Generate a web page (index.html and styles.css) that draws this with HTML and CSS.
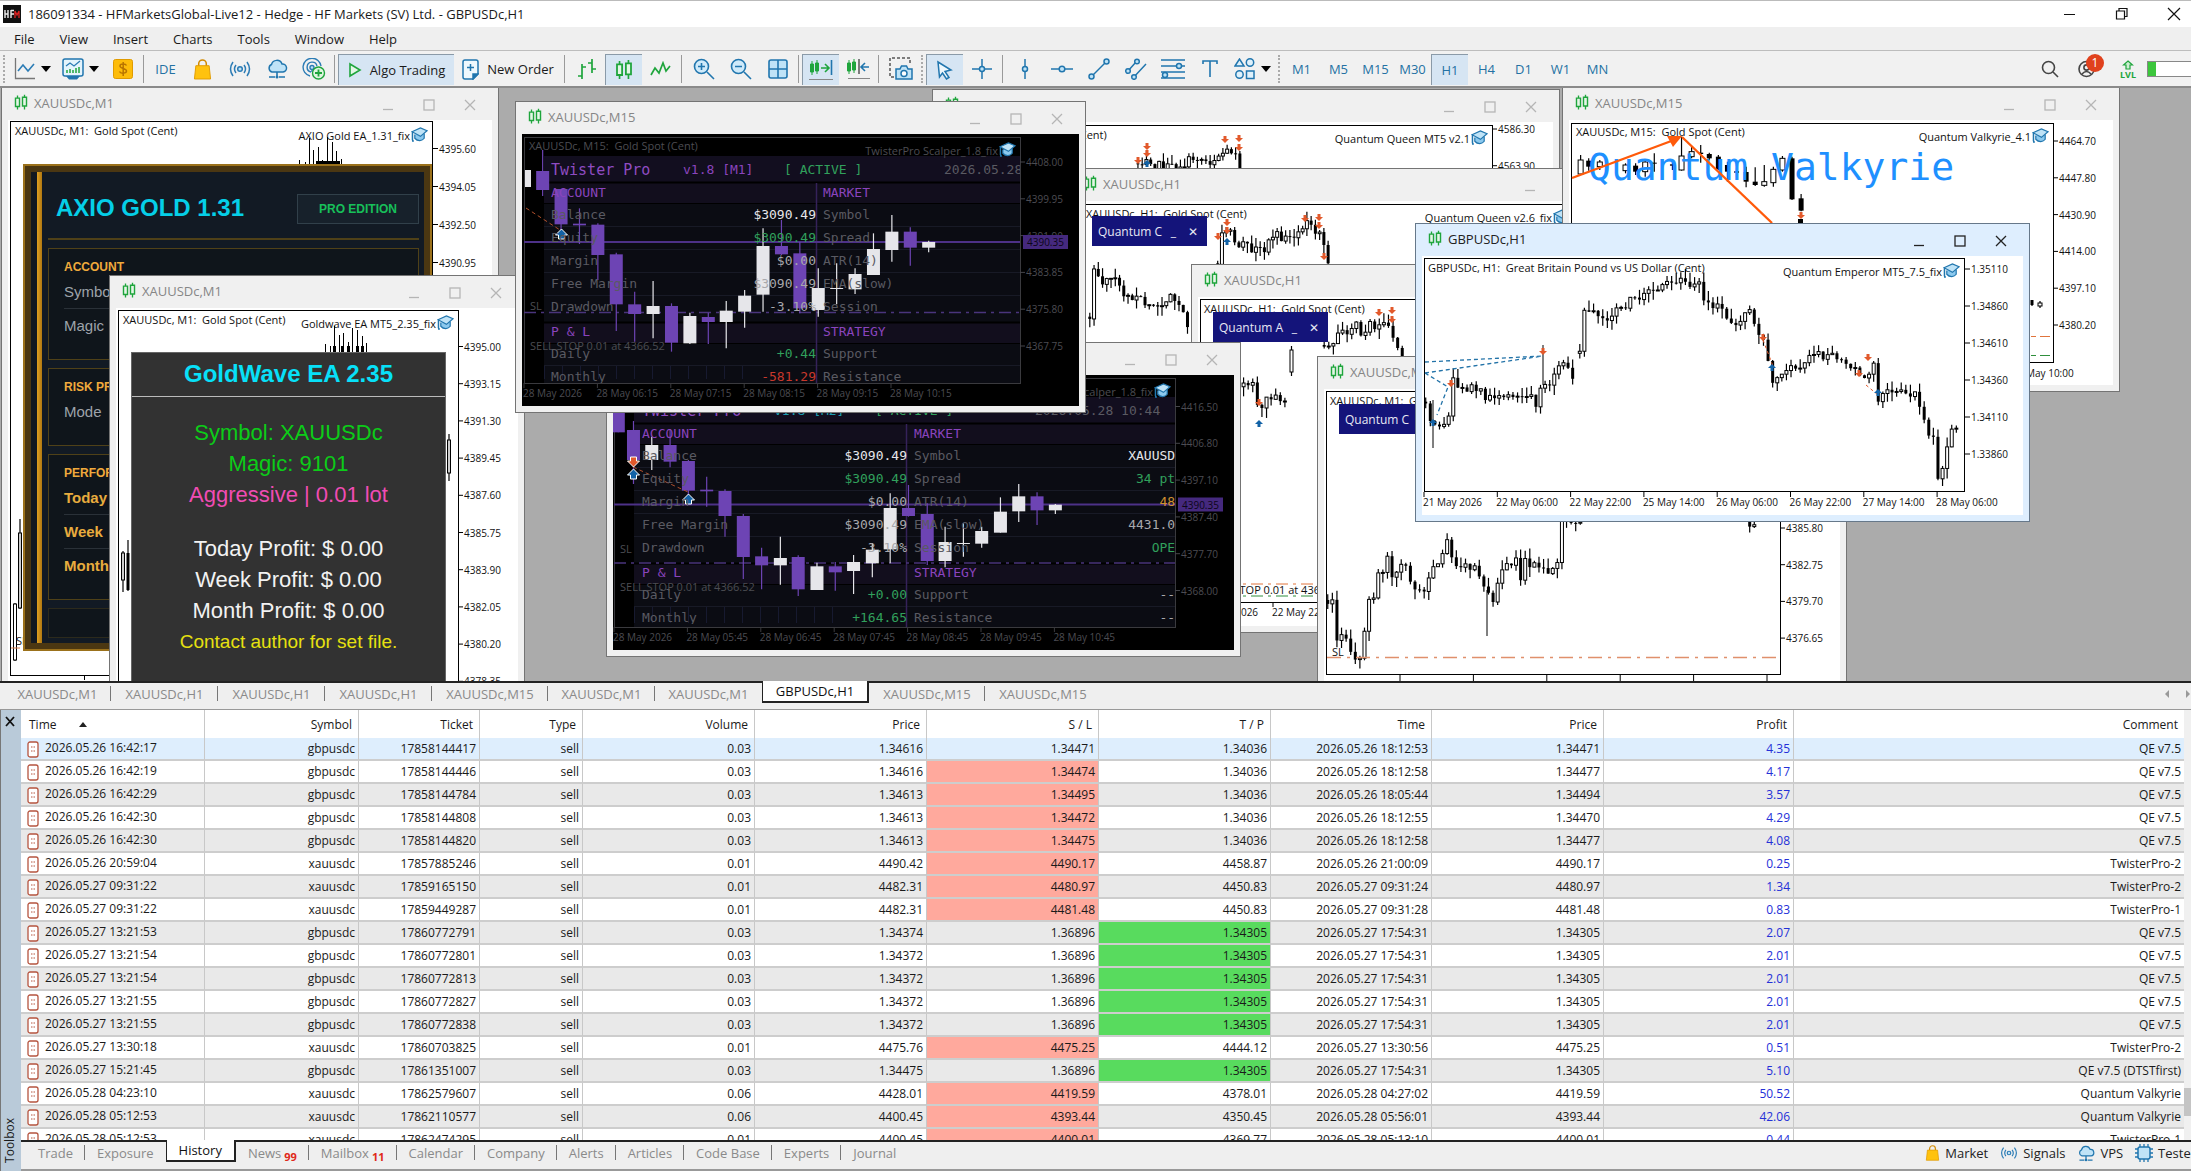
FILE: index.html
```
<!DOCTYPE html>
<html lang="en">
<head>
    <meta charset="UTF-8">
    <meta name="viewport" content="width=device-width, initial-scale=1.0">
    <title>186091334 - HFMarketsGlobal-Live12</title>
    <link rel="stylesheet" href="styles.css">
</head>
<body>
    <!-- Shared icons -->
    <svg class="defs" width="0" height="0">
        <symbol id="i-candles" viewBox="0 0 16 18"><path d="M4 1v3M4 13v4M12 0v3M12 13v4" stroke="#1fa53c" stroke-width="1.5"/><path d="M1.7 4h4.6v9.500H1.700zM9.700 3h4.600v10H9.700z" fill="#e4f6e6" stroke="#1fa53c" stroke-width="1.600"/></symbol>
        <symbol id="i-cap" viewBox="0 0 18 16"><path d="M4 8v4c3 3.500 8 3 10 0V7" fill="#8cc9ee" stroke="#2176ae" stroke-width="1.300"/><path d="M1 5l9-4 7 3-7 6z" fill="#bfe3f7" stroke="#2176ae" stroke-width="1.300"/><path d="M1.500 5v9M1 15h2" stroke="#2176ae" stroke-width="1.600"/></symbol>
        <symbol id="i-bag" viewBox="0 0 20 22"><path d="M6 10V5a4 4 0 0 1 8 0v5" fill="none" stroke="#d18a00" stroke-width="1.600"/><path d="M3 7h14l1.500 14h-17z" fill="#ffc20e" stroke="#e09b00"/></symbol>
        <symbol id="i-signal" viewBox="0 0 22 18"><g fill="none" stroke="#2c7cb5" stroke-width="1.500"><circle cx="11" cy="9" r="2.300" fill="#bfe3f7"/><path d="M7 5q-3 4 0 8M15 5q3 4 0 8M4 2q-5 7 0 14M18 2q5 7 0 14"/></g></symbol>
        <symbol id="i-cloud" viewBox="0 0 22 20"><path d="M6 13a4 4 0 0 1-.500-7.500A5.500 5.500 0 0 1 16 5a4 4 0 0 1 1 8z" fill="#bfe3f7" stroke="#2176ae" stroke-width="1.500"/><path d="M11 13v5M3 18h6M13 18h6" stroke="#2176ae" stroke-width="1.600"/><circle cx="11" cy="18" r="1.500" fill="#2176ae"/></symbol>
    </svg>

    <header class="titlebar">
        <svg width="18" height="18" viewBox="0 0 18 18"><rect width="18" height="18" fill="#111"/><path d="M2 5v8M2 9h3M5 5v8M8 5v8M8 5.500h3M8 9h3" stroke="#eee" stroke-width="1.400"/><path d="M12 13V6l2 4 2-4v7" fill="none" stroke="#d22" stroke-width="1.300"/></svg>
        <h1>186091334 - HFMarketsGlobal-Live12 - Hedge - HF Markets (SV) Ltd. - GBPUSDc,H1</h1>
        <div class="sysbuttons">
            <button aria-label="Minimize"><svg width="14" height="14"><path d="M1 7.500h11" stroke="#111"/></svg></button>
            <button aria-label="Restore"><svg width="14" height="14"><path d="M4 4V1.500h8v8H9.500M1.500 4h8v8h-8z" fill="none" stroke="#111" stroke-width="1.200"/></svg></button>
            <button aria-label="Close"><svg width="14" height="14"><path d="M1 1l12 12M13 1L1 13" stroke="#111" stroke-width="1.200"/></svg></button>
        </div>
    </header>

    <nav class="menubar">
        <button>File</button><button>View</button><button>Insert</button><button>Charts</button><button>Tools</button><button>Window</button><button>Help</button>
    </nav>

    <div class="toolbar">
        <span class="grip"></span>
        <button class="tool drop" aria-label="New chart"><svg width="22" height="22" fill="none"><path d="M1.500 0v20.500H21" stroke="#777" stroke-width="1.300"/><path d="M4 13l5-6 5 6 6-7" stroke="#2c7cb5" stroke-width="1.600"/></svg><i></i></button>
        <button class="tool drop" aria-label="Profiles"><svg width="22" height="22" fill="none"><path d="M4 18h14l-3 3.500H7z" fill="#2176ae"/><rect x="1" y="1" width="20" height="17" rx="2" fill="#e5f4fc" stroke="#2176ae" stroke-width="1.500"/><path d="M4 8l4-3 4 3 6-5" stroke="#2c7cb5" stroke-width="1.300"/><path d="M5 15v-3M8 15v-4M11 15v-3M14 15v-5M17 15V9" stroke="#1fa53c" stroke-width="1.500"/></svg><i></i></button>
        <button class="tool" aria-label="Symbols"><svg width="20" height="20"><rect x=".5" y=".5" width="19" height="19" rx="2" fill="#fdbc0a" stroke="#e09b00"/><path d="M13.500 6.500c-1-2-6.500-2-6.500.500 0 3 6.500 2 6.500 5 0 2.500-6 3-7 .500M10.200 3v14" fill="none" stroke="#b87400" stroke-width="1.500"/></svg></button>
        <span class="sep"></span>
        <button class="tool ide">IDE</button>
        <button class="tool" aria-label="Market"><svg width="19" height="21"><use href="#i-bag"/></svg></button>
        <button class="tool" aria-label="Signals"><svg width="22" height="18"><use href="#i-signal"/></svg></button>
        <button class="tool" aria-label="VPS"><svg width="22" height="20"><use href="#i-cloud"/></svg></button>
        <button class="tool" aria-label="Community"><svg width="24" height="22" fill="none" stroke="#2c7cb5" stroke-width="1.400"><path d="M8 18A9 9 0 1 1 19 8M9 14a5 5 0 1 1 6-6M10 10v4"/><circle cx="10" cy="9.500" r="2" fill="#bfe3f7"/><circle cx="16.500" cy="15" r="6" fill="#dff5df" stroke="#1fa53c"/><path d="M13 15h7M16.500 11.500v7" stroke="#1fa53c" stroke-width="1.800"/></svg></button>
        <span class="sep"></span>
        <button class="tool wide algo active"><svg width="14" height="16"><path d="M2 2l10 6-10 6z" fill="#e4f6e6" stroke="#1fa53c" stroke-width="1.600"/></svg>Algo Trading</button>
        <button class="tool wide order"><svg width="17" height="21" fill="none" stroke="#2176ae" stroke-width="1.500"><path d="M1 3a2 2 0 0 1 2-2h11a2 2 0 0 1 2 2v12l-5 5H3a2 2 0 0 1-2-2z" fill="#eef8fd"/><path d="M11 20v-5h5z" fill="#2176ae"/><path d="M8.500 5v7M5 8.500h7"/></svg>New Order</button>
        <span class="sep"></span>
        <button class="tool" aria-label="Bar chart"><svg width="20" height="20" fill="none" stroke="#1fa53c" stroke-width="1.700"><path d="M5 5v15M1 17h4M5 8h4M15 0v14M11 4h4M15 10h4"/></svg></button>
        <button class="tool active" aria-label="Candlesticks"><svg width="18" height="20"><use href="#i-candles"/></svg></button>
        <button class="tool" aria-label="Line chart"><svg width="22" height="16" fill="none" stroke="#1fa53c" stroke-width="1.700"><path d="M1 14l4-7 4 5 4-10 3 8 4-5"/></svg></button>
        <span class="sep"></span>
        <button class="tool" aria-label="Zoom in"><svg width="22" height="22" fill="none" stroke="#2176ae" stroke-width="1.600"><circle cx="8.500" cy="8.500" r="7" fill="#cfeafa"/><path d="M14 14l7 7M5 8.500h7M8.500 5v7"/></svg></button>
        <button class="tool" aria-label="Zoom out"><svg width="22" height="22" fill="none" stroke="#2176ae" stroke-width="1.600"><circle cx="8.500" cy="8.500" r="7" fill="#cfeafa"/><path d="M14 14l7 7M5 8.500h7"/></svg></button>
        <button class="tool" aria-label="Tile windows"><svg width="20" height="20"><rect x="1" y="1" width="18" height="18" rx="2" fill="#bfe3f7" stroke="#2176ae" stroke-width="1.600"/><path d="M10 1v18M1 10h18" stroke="#2176ae" stroke-width="1.600"/></svg></button>
        <span class="sep"></span>
        <button class="tool active" aria-label="Auto scroll"><svg width="24" height="24" fill="none"><path d="M3 3v14M8 2v14" stroke="#1fa53c"/><path d="M1.500 6h3v8h-3zM6.500 5h3v8h-3z" fill="#1fa53c" stroke="#1fa53c"/><path d="M12 10h7M16 6l4 4-4 4" stroke="#1fa53c" stroke-width="1.600"/><path d="M22.500 2v15" stroke="#2176ae" stroke-width="1.600"/><path d="M0 21.500h24" stroke="#888"/></svg></button>
        <button class="tool" aria-label="Chart shift"><svg width="24" height="24" fill="none"><path d="M3 3v14M8 2v14" stroke="#1fa53c"/><path d="M1.500 6h3v8h-3zM6.500 5h3v8h-3z" fill="#1fa53c" stroke="#1fa53c"/><path d="M13 2v15" stroke="#555" stroke-width="1.500"/><path d="M16 10h7M19 6l-4 4 4 4" stroke="#2176ae" stroke-width="1.600"/><path d="M2 21.500h22" stroke="#888"/></svg></button>
        <span class="sep"></span>
        <button class="tool" aria-label="Screenshot"><svg width="24" height="24" fill="none" stroke="#2176ae" stroke-width="1.500"><path d="M5 20H1V1h20v6" stroke="#555" stroke-dasharray="3 2"/><path d="M7 12h4l1.500-3h5L19 12h4v10H7z" fill="#bfe3f7"/><circle cx="15" cy="16.500" r="3" fill="#fff"/></svg></button>
        <span class="grip"></span>
        <button class="tool active" aria-label="Cursor"><svg width="18" height="20"><path d="M2 2l13 8-6 1.500 4 6-2.500 1.500-4-6-3 4z" fill="#eef8fd" stroke="#2176ae" stroke-width="1.500"/></svg></button>
        <button class="tool" aria-label="Crosshair"><svg width="20" height="20" fill="none" stroke="#2176ae" stroke-width="1.500"><path d="M10 0v20M0 10h20"/><circle cx="10" cy="10" r="2.500" fill="#bfe3f7"/></svg></button>
        <span class="sep"></span>
        <button class="tool" aria-label="Vertical line"><svg width="8" height="20" fill="none" stroke="#2176ae" stroke-width="1.500"><path d="M4 0v20"/><circle cx="4" cy="10" r="2.500" fill="#bfe3f7"/></svg></button>
        <button class="tool" aria-label="Horizontal line"><svg width="22" height="8" fill="none" stroke="#2176ae" stroke-width="1.500"><path d="M0 4h22"/><circle cx="11" cy="4" r="2.800" fill="#bfe3f7"/></svg></button>
        <button class="tool" aria-label="Trend line"><svg width="22" height="22" fill="#bfe3f7" stroke="#2176ae" stroke-width="1.500"><path d="M4 18L18 4"/><circle cx="3.500" cy="18.500" r="2.500"/><circle cx="18.500" cy="3.500" r="2.500"/></svg></button>
        <button class="tool" aria-label="Channel"><svg width="22" height="22" fill="#bfe3f7" stroke="#2176ae" stroke-width="1.500"><path d="M3 13L11 4M8 20L21 6"/><circle cx="3" cy="13" r="2.300"/><circle cx="12" cy="3.500" r="2.300"/><circle cx="9" cy="19" r="2.300"/></svg></button>
        <button class="tool" aria-label="Fibonacci"><svg width="24" height="22" fill="#bfe3f7" stroke="#2176ae" stroke-width="1.500"><path d="M0 2h24M0 8h24M0 14h24M0 20h24"/><circle cx="18" cy="8" r="2.500"/><circle cx="4" cy="17" r="2.500"/></svg></button>
        <button class="tool" aria-label="Text"><svg width="16" height="18" fill="none" stroke="#2176ae" stroke-width="1.600"><path d="M1 4V1h14v3M8 1v16"/></svg></button>
        <button class="tool drop" aria-label="Shapes"><svg width="22" height="22" fill="#dff1fb" stroke="#2176ae" stroke-width="1.500"><path d="M1 8l4.500-7L10 8z"/><circle cx="16" cy="4.500" r="3.700"/><circle cx="5.500" cy="16.500" r="3.700"/><rect x="12.500" y="13" width="7.500" height="7.500"/></svg><i></i></button>
        <span class="grip"></span>
        <button class="tool tf">M1</button><button class="tool tf">M5</button><button class="tool tf">M15</button><button class="tool tf">M30</button><button class="tool tf active">H1</button><button class="tool tf">H4</button><button class="tool tf">D1</button><button class="tool tf">W1</button><button class="tool tf">MN</button>

        <div class="status">
            <button class="tool" aria-label="Search"><svg width="18" height="18" fill="none" stroke="#444" stroke-width="1.600"><circle cx="7.500" cy="7.500" r="6"/><path d="M12 12l5 5"/></svg></button>
            <button class="tool account" aria-label="Account"><svg width="18" height="18" fill="none" stroke="#444" stroke-width="1.600"><circle cx="8.500" cy="9" r="7.500"/><circle cx="8.500" cy="7.500" r="2.600"/><path d="M4 14q4.500-5 9 0"/></svg><span class="badge">1</span></button>
            <span class="lvl"><svg width="12" height="10"><path d="M6 1l4.500 4H8v4H4V5H1.500z" fill="#cfeed3" stroke="#1fa53c" stroke-width="1.200"/></svg>LVL</span>
            <span class="meter"></span>
        </div>
    </div>

    <main class="desktop">
        <section class="win" id="win-axio">
            <div class="caption"><svg width="14" height="17"><use href="#i-candles"/></svg><span>XAUUSDc,M1</span></div>
            <div class="client">
                <svg class="chart" id="c-axio" viewBox="8 120 484 560" width="484" height="560"></svg>
                <div class="axio">
                    <div class="axio-head"><strong>AXIO GOLD 1.31</strong><em>PRO EDITION</em></div>
                    <div class="axio-card tall"><b>ACCOUNT</b><p>Symbol</p><p>Magic</p></div>
                    <div class="axio-card"><b>RISK PROFILE</b><p>Mode</p></div>
                    <div class="axio-card perf"><b>PERFORMANCE</b><p>Today</p><p>Week</p><p>Month</p></div>
                    <div class="axio-card last"></div>
                </div>
            </div>
        </section>

        <section class="win" id="win-wave">
            <div class="caption"><svg width="14" height="17"><use href="#i-candles"/></svg><span>XAUUSDc,M1</span></div>
            <div class="client">
                <svg class="chart" id="c-wave" viewBox="116 308 402 400" width="402" height="400"></svg>
                <div class="wave">
                    <h2>GoldWave EA 2.35</h2>
                    <p class="green">Symbol: XAUUSDc</p>
                    <p class="green">Magic: 9101</p>
                    <p class="pink">Aggressive | 0.01 lot</p>
                    <p class="first">Today Profit: $ 0.00</p>
                    <p>Week Profit: $ 0.00</p>
                    <p>Month Profit: $ 0.00</p>
                    <p class="note">Contact author for set file.</p>
                </div>
            </div>
        </section>

        <section class="win" id="win-queen21">
            <div class="caption"><svg width="14" height="17"><use href="#i-candles"/></svg></div>
            <div class="client"><svg class="chart" id="c-queen21" viewBox="939 122 614 260" width="614" height="260"></svg></div>
        </section>

        <section class="win" id="win-queen26">
            <div class="caption"><svg width="14" height="17"><use href="#i-candles"/></svg><span>XAUUSDc,H1</span></div>
            <div class="client">
                <svg class="chart" id="c-queen26" viewBox="1077 201 560 360" width="560" height="360"></svg>
                <div class="mini"><span>Quantum C</span><button aria-label="Collapse">_</button><button aria-label="Close">✕</button></div>
            </div>
        </section>

        <section class="win" id="win-advisor">
            <div class="caption"><svg width="14" height="17"><use href="#i-candles"/></svg><span>XAUUSDc,H1</span></div>
            <div class="client">
                <svg class="chart" id="c-advisor" viewBox="1198 297 486 329" width="486" height="329"></svg>
                <div class="mini"><span>Quantum A</span><button aria-label="Collapse">_</button><button aria-label="Close">✕</button></div>
            </div>
        </section>

        <section class="win" id="win-queenm1">
            <div class="caption"><svg width="14" height="17"><use href="#i-candles"/></svg><span>XAUUSDc,M1</span></div>
            <div class="client">
                <svg class="chart" id="c-queenm1" viewBox="1324 389 516 320" width="516" height="320"></svg>
                <div class="mini"><span>Quantum C</span><button aria-label="Collapse">_</button><button aria-label="Close">✕</button></div>
            </div>
        </section>

        <section class="win" id="win-twister2">
            <div class="caption"><svg width="14" height="17"><use href="#i-candles"/></svg><span>XAUUSDc,M15</span></div>
            <div class="client dark">
                <svg class="chart" id="c-twister2" viewBox="613 375 621 275" width="621" height="275"></svg>
                <div class="twister">
                    <div class="tw-head"><strong>Twister Pro</strong><span class="cyan">v1.8 [M2]</span><span class="ok">[ ACTIVE ]</span><span>2026.05.28 10:44</span></div>
                    <div class="tw-cols">
                        <dl>
                            <dt class="sec">ACCOUNT</dt><dd></dd>
                            <dt>Balance</dt><dd class="hi">$3090.49</dd>
                            <dt>Equity</dt><dd class="ok">$3090.49</dd>
                            <dt>Margin</dt><dd>$0.00</dd>
                            <dt>Free Margin</dt><dd>$3090.49</dd>
                            <dt>Drawdown</dt><dd>-3.10%</dd>
                            <dt class="sec next">P &amp; L</dt><dd></dd>
                            <dt>Daily</dt><dd class="ok">+0.00</dd>
                            <dt>Monthly</dt><dd class="ok">+164.65</dd>
                        </dl>
                        <dl>
                            <dt class="sec">MARKET</dt><dd></dd>
                            <dt>Symbol</dt><dd class="hi">XAUUSDc</dd>
                            <dt>Spread</dt><dd class="ok">34 pts</dd>
                            <dt>ATR(14)</dt><dd class="amber">485</dd>
                            <dt>EMA(slow)</dt><dd>4431.01</dd>
                            <dt>Session</dt><dd class="ok">OPEN</dd>
                            <dt class="sec next">STRATEGY</dt><dd></dd>
                            <dt>Support</dt><dd>---</dd>
                            <dt>Resistance</dt><dd>---</dd>
                        </dl>
                    </div>
                </div>
            </div>
        </section>

        <section class="win" id="win-twister1">
            <div class="caption"><svg width="14" height="17"><use href="#i-candles"/></svg><span>XAUUSDc,M15</span></div>
            <div class="client dark">
                <svg class="chart" id="c-twister1" viewBox="522 134 557 272" width="557" height="272"></svg>
                <div class="twister">
                    <div class="tw-head"><strong>Twister Pro</strong><span class="violet">v1.8 [M1]</span><span class="ok">[ ACTIVE ]</span><span>2026.05.28</span></div>
                    <div class="tw-cols">
                        <dl>
                            <dt class="sec">ACCOUNT</dt><dd></dd>
                            <dt>Balance</dt><dd class="hi">$3090.49</dd>
                            <dt>Equity</dt><dd class="ok">$3090.49</dd>
                            <dt>Margin</dt><dd>$0.00</dd>
                            <dt>Free Margin</dt><dd>$3090.49</dd>
                            <dt>Drawdown</dt><dd>-3.10%</dd>
                            <dt class="sec next">P &amp; L</dt><dd></dd>
                            <dt>Daily</dt><dd class="ok">+0.44</dd>
                            <dt>Monthly</dt><dd class="bad">-581.29</dd>
                        </dl>
                        <dl>
                            <dt class="sec">MARKET</dt><dd></dd>
                            <dt>Symbol</dt><dd></dd>
                            <dt>Spread</dt><dd></dd>
                            <dt>ATR(14)</dt><dd></dd>
                            <dt>EMA(slow)</dt><dd></dd>
                            <dt>Session</dt><dd></dd>
                            <dt class="sec next">STRATEGY</dt><dd></dd>
                            <dt>Support</dt><dd></dd>
                            <dt>Resistance</dt><dd></dd>
                        </dl>
                    </div>
                </div>
            </div>
        </section>

        <section class="win" id="win-valkyrie">
            <div class="caption"><svg width="14" height="17"><use href="#i-candles"/></svg><span>XAUUSDc,M15</span></div>
            <div class="client"><svg class="chart" id="c-valkyrie" viewBox="1569 120 544 265" width="544" height="265"></svg></div>
        </section>

        <section class="win front" id="win-gbp">
            <div class="caption"><svg width="14" height="17"><use href="#i-candles"/></svg><span>GBPUSDc,H1</span></div>
            <div class="client"><svg class="chart" id="c-gbp" viewBox="1422 256 601 259" width="601" height="259"></svg></div>
        </section>
    </main>

    <nav class="charttabs">
        <button>XAUUSDc,M1</button><button>XAUUSDc,H1</button><button>XAUUSDc,H1</button><button>XAUUSDc,H1</button><button>XAUUSDc,M15</button><button>XAUUSDc,M1</button><button>XAUUSDc,M1</button><button class="on">GBPUSDc,H1</button><button>XAUUSDc,M15</button><button>XAUUSDc,M15</button>
        <span class="arrows"><i></i><i class="right"></i></span>
    </nav>

    <div class="toolbox">
        <aside><button aria-label="Close toolbox"><svg width="10" height="11"><path d="M1 1l8 9M9 1L1 10" stroke="#111" stroke-width="1.800"/></svg></button><span>Toolbox</span></aside>
        <div class="pane">
            <div class="history">
                <table>
                    <colgroup><col class="w184"><col class="w154"><col class="w121"><col class="w103"><col class="w172"><col class="w172"><col class="w172"><col class="w172"><col class="w161"><col class="w172"><col class="w190"><col></colgroup>
                    <thead><tr><th class="sorted">Time</th><th>Symbol</th><th>Ticket</th><th>Type</th><th>Volume</th><th>Price</th><th>S / L</th><th>T / P</th><th>Time</th><th>Price</th><th>Profit</th><th>Comment</th></tr></thead>
                    <tbody id="deals"></tbody>
                </table>
                <div class="scroll"><i></i></div>
            </div>
            <nav class="boxtabs">
                <button>Trade</button><button>Exposure</button><button class="on">History</button><button>News<sub>99</sub></button><button>Mailbox<sub>11</sub></button><button>Calendar</button><button>Company</button><button>Alerts</button><button>Articles</button><button>Code Base</button><button>Experts</button><button>Journal</button>
                <div class="services">
                    <a href="#"><svg width="15" height="16"><use href="#i-bag"/></svg>Market</a>
                    <a href="#"><svg width="18" height="14"><use href="#i-signal"/></svg>Signals</a>
                    <a href="#"><svg width="18" height="17"><use href="#i-cloud"/></svg>VPS</a>
                    <a href="#"><svg width="18" height="18"><path d="M5 0v18M9 0v18M13 0v18M0 5h18M0 9h18M0 13h18" stroke="#2176ae" stroke-width="1.300"/><rect x="3" y="3" width="12" height="12" rx="2" fill="#bfe3f7" stroke="#2176ae" stroke-width="1.500"/></svg>Tester</a>
                </div>
            </nav>
        </div>
    </div>
    <script src="script.js"></script>
</body>
</html>
```

FILE: styles.css
```
* {
    box-sizing: border-box;
}

body {
    margin: 0;
    height: 100vh;
    display: flex;
    flex-direction: column;
    overflow: hidden;
    background: #efefef;
    color: #1a1a1a;
    font-family: "Open Sans", "Noto Sans", sans-serif;
    font-size: 12px;
}

button {
    font: inherit;
    color: inherit;
    border: 0;
    padding: 0;
    background: none;
    white-space: nowrap;
}

svg {
    flex: none;
}

.defs {
    position: absolute;
}

/* Title bar and menu */
.titlebar {
    flex: none;
    height: 27px;
    display: flex;
    align-items: center;
    padding-left: 3px;
    gap: 7px;
    background: #fff;
    border-top: 1px solid #bbb;
}

.titlebar h1 {
    margin: 0;
    font-size: 13px;
    font-weight: normal;
}

.sysbuttons {
    margin-left: auto;
    display: flex;
    padding-right: 5px;
}

.sysbuttons button {
    width: 52px;
    height: 24px;
    display: flex;
    align-items: center;
    justify-content: center;
}

.sysbuttons button:last-child {
    width: 24px;
    margin-left: 14px;
}

.menubar {
    flex: none;
    height: 24px;
    display: flex;
    align-items: center;
    padding-left: 14px;
    gap: 25px;
    border-bottom: 1px solid #bdbdbd;
    font-size: 13px;
}

/* Toolbar */
.toolbar {
    flex: none;
    height: 37px;
    display: flex;
    align-items: center;
    padding: 3px 0 2px 1px;
    border-bottom: 2px solid #8a8a8a;
    background: #f1f1f1;
}

.tool {
    flex: none;
    width: 37px;
    height: 31px;
    display: flex;
    align-items: center;
    justify-content: center;
}

.tool.active {
    background: #d6e5f3;
    border-top: 1px solid #8a9aa8;
    border-left: 1px solid #8a9aa8;
}

.tool.drop {
    width: 48px;
    gap: 5px;
}

.tool.drop i {
    border: 5px solid transparent;
    border-top: 6px solid #000;
    border-bottom: 0;
}

.tool.wide {
    font-size: 13px;
    gap: 8px;
}

.tool.algo {
    width: 116px;
}

.tool.order {
    width: 108px;
}

.tool.ide,
.tool.tf {
    color: #2471a3;
    font-size: 13px;
}

.sep {
    flex: none;
    width: 1px;
    height: 28px;
    margin: 0 3px 0 2px;
    background: #9a9a9a;
}

.grip {
    flex: none;
    width: 0;
    height: 28px;
    margin: 0 3px 0 2px;
    border-left: 2px dotted #aaa;
}

.status {
    margin-left: auto;
    display: flex;
    align-items: center;
}

.account {
    position: relative;
}

.badge {
    position: absolute;
    left: 18px;
    top: 0;
    width: 18px;
    height: 18px;
    border-radius: 9px;
    background: #e0411d;
    color: #fff;
    line-height: 18px;
    text-align: center;
}

.lvl {
    width: 38px;
    margin-left: 4px;
    display: flex;
    flex-direction: column;
    align-items: center;
    color: #1fa53c;
    font-size: 9px;
    font-weight: bold;
    line-height: 9px;
}

.meter {
    width: 44px;
    height: 16px;
    border: 1px solid #888;
    border-right: 0;
    background: linear-gradient(90deg, #3cc63c 8px, #fff 8px);
}

/* Chart windows on the desktop */
.desktop {
    flex: none;
    height: 593px;
    position: relative;
    overflow: hidden;
    background: #ababab;
}

.win {
    position: absolute;
    display: flex;
    flex-direction: column;
    padding: 0 6px 6px;
    border: 1px solid #747474;
    background: #f0f0f0;
}

.win.front {
    background: #deeefe;
    border-color: #66788a;
}

#win-axio { left: 1px; top: -1px; width: 498px; height: 640px; }
#win-wave { left: 109px; top: 187px; width: 416px; height: 440px; }
#win-twister1 { left: 515px; top: 13px; width: 571px; height: 312px; }
#win-twister2 { left: 606px; top: 254px; width: 635px; height: 315px; }
#win-queen21 { left: 932px; top: 1px; width: 628px; height: 300px; }
#win-queen26 { left: 1070px; top: 80px; width: 571px; height: 400px; }
#win-advisor { left: 1191px; top: 176px; width: 500px; height: 369px; }
#win-queenm1 { left: 1317px; top: 268px; width: 530px; height: 360px; }
#win-valkyrie { left: 1562px; top: -1px; width: 558px; height: 305px; }
#win-gbp { left: 1415px; top: 135px; width: 615px; height: 299px; }

.caption {
    flex: none;
    height: 32px;
    display: flex;
    align-items: center;
    gap: 6px;
    padding: 0 2px 3px 6px;
    color: #868686;
    font-size: 13px;
}

.front .caption {
    color: #222;
}

.caption .btns {
    margin-left: auto;
    display: flex;
    padding-top: 4px;
}

.caption .btns button {
    width: 41px;
    height: 20px;
    display: flex;
    align-items: center;
    justify-content: center;
}

.caption .btns svg {
    fill: none;
    stroke: #b5b5b5;
    stroke-width: 1.3;
}

.front .btns svg {
    stroke: #222;
}

.client {
    flex: 1;
    position: relative;
    overflow: hidden;
    background: #fff;
}

.client.dark {
    background: #000;
}

.chart {
    display: block;
}

.chart text {
    font-family: "Open Sans", "Noto Sans", sans-serif;
    font-size: 11px;
    fill: #111;
    dominant-baseline: central;
    white-space: pre;
}

.chart .axis {
    font-size: 10px;
}

.chart .end {
    text-anchor: end;
}

.dark .chart text {
    fill: #4c4c52;
}

.dark .chart .tag {
    fill: #0c0618;
}

.chart .headline {
    font-family: "DejaVu Sans Mono", monospace;
    font-size: 38px;
    fill: #1e90ff;
}

.mini {
    position: absolute;
    left: 15px;
    top: 15px;
    width: 115px;
    height: 30px;
    display: flex;
    align-items: center;
    padding: 0 5px 0 6px;
    background: #14147a;
    color: #e8e8f4;
    font-size: 12px;
    white-space: nowrap;
}

.mini span {
    margin-right: auto;
}

.mini button {
    width: 19px;
    flex: none;
}

/* AXIO panel */
.axio {
    position: absolute;
    left: 15px;
    top: 44px;
    width: 409px;
    height: 487px;
    padding: 14px 5px 0 17px;
    border: 8px solid #4b3712;
    outline: 2px solid #9b711b;
    outline-offset: -2px;
    background: linear-gradient(90deg, #121820 6px, #e0a020 6px, #b07812 11px, #121a24 11px);
    font-family: "Liberation Sans", Arial, sans-serif;
    color: #9ea3aa;
    font-size: 15px;
}

.axio-head {
    height: 54px;
    display: flex;
    justify-content: space-between;
    align-items: flex-start;
    padding: 8px 0 0 8px;
    margin-bottom: 8px;
    border-bottom: 2px solid #4f4118;
}

.axio-head strong {
    color: #05cfe8;
    font-size: 24px;
    line-height: 28px;
}

.axio-head em {
    width: 122px;
    line-height: 28px;
    border: 1px solid #31404a;
    background: #17212b;
    color: #17c05a;
    font-size: 12px;
    font-style: normal;
    font-weight: bold;
    text-align: center;
}

.axio-card {
    height: 78px;
    margin-bottom: 8px;
    padding: 10px 15px 0;
    border: 1px solid #4f4118;
    background: #0f151b;
}

.axio-card.tall {
    height: 112px;
}

.axio-card.perf {
    height: 146px;
    color: #e8ac3e;
    font-weight: bold;
}

.axio-card.last {
    height: 30px;
    border-color: #2c2a1c;
}

.axio-card b {
    display: block;
    height: 16px;
    color: #f0aa3c;
    font-size: 12px;
    line-height: 16px;
}

.axio-card p {
    margin: 0;
    height: 34px;
    line-height: 34px;
    border-bottom: 1px solid #2a3138;
}

.axio-card p:last-child {
    border: 0;
}

/* GoldWave panel */
.wave {
    position: absolute;
    left: 15px;
    top: 44px;
    width: 315px;
    height: 400px;
    border: 1px solid #666;
    background: #323232;
    color: #f2f2f2;
    font-family: "Liberation Sans", Arial, sans-serif;
    font-size: 22px;
    text-align: center;
}

.wave h2 {
    margin: 0 0 20px;
    height: 44px;
    border-bottom: 1px solid #bbb;
    color: #08e0f8;
    font-size: 24px;
    line-height: 42px;
}

.wave p {
    margin: 0;
    line-height: 31px;
}

.wave .green { color: #0ccc18; }
.wave .pink { color: #f04cb4; }
.wave .first { margin-top: 23px; }
.wave .note { color: #e6e010; font-size: 19px; }

/* Twister panel */
.twister {
    position: absolute;
    left: 22px;
    top: 22px;
    right: 59px;
    height: 227px;
    overflow: hidden;
    font-family: "DejaVu Sans Mono", monospace;
    font-size: 13px;
    color: #5a5a62;
    white-space: nowrap;
}

.tw-head {
    height: 27px;
    display: grid;
    grid-template-columns: 132px 101px 160px 160px;
    align-items: center;
    padding-left: 7px;
}

.tw-head strong {
    font-size: 15px;
    font-weight: normal;
    color: #8f4cc2;
}

.tw-cols {
    display: grid;
    grid-template-columns: 272px 276px;
}

.tw-cols dl {
    margin: 0;
    padding-left: 7px;
    display: grid;
    grid-template-columns: 1fr auto;
    align-content: start;
    line-height: 23px;
}

.tw-cols dt.sec {
    line-height: 20px;
    color: #8a44bd;
}

.tw-cols dt.next {
    margin-top: 4px;
}

.tw-cols dd {
    margin: 0;
    color: #a8a8ac;
    text-align: right;
}

.twister .ok { color: #31a05c; }
.twister .bad { color: #c8382c; }
.twister .hi { color: #e6e6ea; }
.twister .amber { color: #d09030; }
.twister .cyan { color: #1c9cb0; }
.twister .violet { color: #8a44bd; }

/* Tab strips */
.charttabs,
.boxtabs {
    flex: none;
    height: 29px;
    display: flex;
    align-items: flex-start;
    border-top: 2px solid #222;
    color: #8a8a8a;
    font-size: 13px;
}

.charttabs {
    padding-left: 4px;
    border-bottom: 1px solid #999;
}

.charttabs button,
.boxtabs button {
    height: 21px;
    line-height: 16px;
    position: relative;
}

.charttabs button {
    width: 107px;
}

.charttabs button:nth-child(5),
.charttabs button:nth-child(9),
.charttabs button:nth-child(10) {
    width: 116px;
}

/* thin divider between two idle tabs */
.charttabs button:not(.on)::after,
.boxtabs button:not(.on)::after {
    content: "";
    position: absolute;
    right: 0;
    top: 3px;
    height: 15px;
    border-right: 1px solid #777;
}

.charttabs button:nth-child(7)::after,
.charttabs button:nth-child(10)::after,
.boxtabs button:nth-child(2)::after,
.boxtabs button:nth-child(12)::after {
    display: none;
}

.charttabs .on,
.boxtabs .on {
    height: 22px;
    margin-top: -2px;
    line-height: 20px;
    background: #fff;
    border: solid #222;
    border-width: 0 2px 2px 1px;
    color: #111;
}

.arrows {
    margin-left: auto;
    display: flex;
    gap: 17px;
    padding: 7px 1px 0 0;
}

.arrows i {
    border: 4px solid transparent;
    border-left: 0;
    border-right: 4px solid #999;
}

.arrows i.right {
    transform: scaleX(-1);
}

/* Toolbox */
.toolbox {
    flex: 1;
    min-height: 0;
    display: flex;
}

.toolbox aside {
    width: 21px;
    flex: none;
    display: flex;
    flex-direction: column;
    justify-content: space-between;
    align-items: center;
    padding: 4px 3px 8px 0;
    background: #b9cad9;
    border-left: 1px solid #777;
}

.toolbox aside span {
    writing-mode: vertical-rl;
    transform: rotate(180deg);
}

.pane {
    flex: 1;
    min-width: 0;
    display: flex;
    flex-direction: column;
}

.history {
    flex: 1;
    min-height: 0;
    overflow: hidden;
    display: flex;
    background: #fff;
}

table {
    flex: 1;
    width: 100%;
    table-layout: fixed;
    border-collapse: separate;
    border-spacing: 0;
}

.w184 { width: 184px; }
.w154 { width: 154px; }
.w121 { width: 121px; }
.w103 { width: 103px; }
.w172 { width: 172px; }
.w161 { width: 161px; }
.w190 { width: 190px; }

th,
td {
    padding: 0 3px 0 0;
    border-right: 1px solid #c8c8c8;
    text-align: right;
    font-weight: normal;
    white-space: nowrap;
}

th {
    height: 28px;
    padding-right: 6px;
}

td {
    height: 23px;
    border-bottom: 2px solid #cdcdcd;
}

th:first-child,
td:first-child {
    text-align: left;
    padding-left: 6px;
}

th:first-child {
    padding-left: 8px;
}

td:first-child svg {
    vertical-align: middle;
    margin-right: 6px;
}

th:last-child,
td:last-child {
    border-right: 0;
}

.sorted::after {
    content: "";
    display: inline-block;
    margin: 0 0 2px 22px;
    border: 4px solid transparent;
    border-top: 0;
    border-bottom: 5px solid #222;
}

tbody tr:nth-child(odd) { background: #e9e9e9; }
tbody tr:first-child { background: #deeefd; }
td.sl { background: #ffa99d; }
td.tp { background: #58db5e; }
td.profit { color: #2430d8; }

.scroll {
    width: 7px;
    flex: none;
    display: flex;
    align-items: flex-end;
    padding-bottom: 24px;
    background: #f0f0f0;
}

.scroll i {
    width: 7px;
    height: 28px;
    background: #c4c4c4;
}

.boxtabs {
    height: 31px;
    padding-left: 5px;
    border-bottom: 2px solid #999;
}

.boxtabs button {
    padding: 0 12px;
}

.boxtabs sub {
    margin-left: 3px;
    color: #e02818;
    font-weight: bold;
    font-size: 11px;
    line-height: 0;
}

.services {
    margin-left: auto;
    display: flex;
    gap: 12px;
    padding: 2px 0 0;
    margin-right: -5px;
}

.services a {
    display: flex;
    align-items: center;
    gap: 5px;
    color: #222;
    text-decoration: none;
}
```

FILE: script.js
```
var NS = "http://www.w3.org/2000/svg";

function add(svg, tag, attrs, text) {
    var el = document.createElementNS(NS, tag);
    for (var k in attrs) el.setAttribute(k, attrs[k]);
    if (text) el.textContent = text;
    svg.appendChild(el);
    return el;
}

function line(svg, x1, y1, x2, y2, color, extra) {
    var a = { x1: x1, y1: y1, x2: x2, y2: y2, stroke: color };
    for (var k in extra) a[k] = extra[k];
    add(svg, "line", a);
}

function label(svg, x, y, text, cls) {
    add(svg, "text", { x: x, y: y, "class": cls || "" }, text);
}

// Plot frame: left, top, right, bottom
function frame(svg, f, color) {
    add(svg, "rect", { x: f[0] + .5, y: f[1] + .5, width: f[2] - f[0], height: f[3] - f[1], fill: "none", stroke: color });
}

function prices(svg, x, y, dy, list, color) {
    list.forEach(function (p, i) {
        line(svg, x - 6, y + i * dy, x - 1, y + i * dy, color);
        label(svg, x, y + i * dy, p, "axis");
    });
}

function times(svg, x, y, dx, list, color) {
    list.forEach(function (t, i) {
        line(svg, x + i * dx + 1, y - 10, x + i * dx + 1, y - 5, color);
        label(svg, x + i * dx, y, t, "axis");
    });
}

function caption(svg, x, y, title, right, ry, expert) {
    label(svg, x, y, title);
    if (expert) {
        label(svg, right - 20, ry, expert, "end");
        add(svg, "use", { href: "#i-cap", x: right - 19, y: ry - 8, width: 17, height: 15 });
    }
}

function candle(svg, x, hi, top, bottom, lo, w, fill, stroke) {
    line(svg, x, hi, x, lo, stroke, { "stroke-width": 1.2 });
    add(svg, "rect", { x: x - w / 2, y: top, width: w, height: Math.max(1, bottom - top), fill: fill, stroke: stroke, "stroke-width": fill === stroke ? 0 : 1 });
}

// Small candles along a path of price points
function walk(svg, map, pts, seed, noise) {
    var i = 0, prev = pts[0][1];
    function rnd() {
        seed = (seed * 1103515245 + 12345) % 2147483648;
        return seed / 2147483648;
    }
    for (var u = pts[0][0]; u <= pts[pts.length - 1][0]; u += 9) {
        while (i < pts.length - 2 && pts[i + 1][0] < u) i++;
        var a = pts[i], b = pts[i + 1];
        var v = a[1] + (b[1] - a[1]) * (u - a[0]) / (b[0] - a[0]) + (rnd() - .5) * noise;
        var up = v < prev;
        var top = Math.min(v, prev), bottom = Math.max(v, prev);
        candle(svg, map.x + u / map.kx, map.y + (top - rnd() * 30) / 3, map.y + top / 3, map.y + bottom / 3,
            map.y + (bottom + rnd() * 30) / 3, 3, up ? "#fff" : "#000", "#000");
        prev = v;
    }
}

function arrow(svg, x, y, dir) {
    var c = dir > 0 ? "#e2592b" : "#1262a6", s = dir;
    add(svg, "path", { d: "M" + x + " " + (y + 4 * s) + "l-4 " + (-4 * s) + "h2.500v" + (-3 * s) + "h3v" + (3 * s) + "h2.500z", fill: c });
}

// AXIO
var s = document.getElementById("c-axio");
frame(s, [10, 121, 432, 675], "#000");
caption(s, 15, 130, "XAUUSDc, M1:  Gold Spot (Cent)", 430, 135, "AXIO Gold EA_1.31_fix");
prices(s, 439, 148.5, 38, ["4395.60", "4394.05", "4392.50", "4390.95"], "#000");
[[299, 160], [305, 162], [309, 138], [313, 150], [318, 147], [322, 160], [327, 137], [332, 142], [336, 151], [341, 159]].forEach(function (p) {
    line(s, p[0] + .5, p[1], p[0] + .5, 165, "#000");
});
add(s, "rect", { x: 316, y: 161, width: 24, height: 4, fill: "#000" });
candle(s, 20, 519, 533, 608, 609, 3, "#ccc", "#000");
candle(s, 15, 603, 604, 660, 661, 3, "#fff", "#000");
line(s, 11, 648, 24, 648, "#d07848", { "stroke-dasharray": "9 4" });
label(s, 16, 640, "SL");
line(s, 84.5, 675, 84.5, 681, "#000");

// GoldWave
s = document.getElementById("c-wave");
frame(s, [118, 310, 458, 760], "#000");
caption(s, 123, 319, "XAUUSDc, M1:  Gold Spot (Cent)", 456, 323, "Goldwave EA MT5_2.35_fix");
prices(s, 464, 346.5, 37.2, ["4395.00", "4393.15", "4391.30", "4389.45", "4387.60", "4385.75", "4383.90", "4382.05", "4380.20", "4378.35"], "#000");
[[325, 344], [330, 346], [334, 326], [339, 335], [343, 333], [348, 342], [352, 328], [357, 330], [362, 336], [366, 343]].forEach(function (p) {
    line(s, p[0] + .5, p[1], p[0] + .5, 353, "#000");
});
[334, 342, 348, 357, 362].forEach(function (x) {
    add(s, "rect", { x: x - 1, y: 346, width: 3, height: 7, fill: "#000" });
});
candle(s, 449, 434, 440, 473, 481, 3, "#ccc", "#000");
candle(s, 123, 551, 553, 580, 592, 3, "#ccc", "#000");
candle(s, 128, 540, 553, 590, 591, 3, "#000", "#000");

// Twister charts share one look
function twister(id, f, dx, title, list, y0, tags, tx, candles, map) {
    var s = document.getElementById(id), L = f[0], T = f[1], R = f[2], B = f[3];
    var px = L + 20, mid = L + 292.5;
    add(s, "rect", { x: px, y: T + 19, width: R - px, height: 26, fill: "#120e1f" });
    add(s, "rect", { x: px, y: T + 46, width: R - px, height: B - T - 46, fill: "#0b0c13" });
    [T + 46, T + 186].forEach(function (y) {
        add(s, "rect", { x: px, y: y, width: R - px, height: 20, fill: "#120e1d" });
        line(s, px, y - .5, R, y - .5, "#000", { "stroke-width": 2 });
        line(s, px, y + 20.5, R, y + 20.5, "#000");
    });
    [90, 113, 136, 159, 229].forEach(function (d) {
        line(s, px, T + d - .5, R, T + d - .5, "#181a26");
    });
    for (var x = px; x < px + 210; x += 18) line(s, x + .5, T + 229, x + .5, B - 4, "#171a30");
    line(s, mid, T + 46, mid, B, "#35225a", { "stroke-width": 1.5 });
    frame(s, f, "#3a3a3e");
    caption(s, L + 5, T + 8, title, R - 2, T + 13, "TwisterPro Scalper_1.8_fix");
    label(s, L + 6, T + 168 + dx, "SL");
    label(s, L + 6, T + 208, "SELL STOP 0.01 at 4366.52");
    prices(s, R + 6, y0, 36.8, list, "#45454a");
    times(s, L - 1, B + 10, 73.4, tags, "#3a3a3e");
    line(s, L, map.line, R, map.line, "#4d3188", { "stroke-width": 2 });
    line(s, L, map.stop, R, map.stop, "#4a347c", { "stroke-dasharray": "12 5 3 5", "stroke-width": 1.3 });
    candles.forEach(function (c) {
        var col = c[5] ? "#e6e6ea" : "#6d44b4";
        candle(s, map.x + c[0] / map.kx, map.y + c[1] / 3, map.y + c[2] / 3, map.y + c[3] / 3, map.y + c[4] / 3, 13, col, col);
    });
    add(s, "rect", { x: tx, y: map.line - 7, width: 45, height: 14, fill: "#45297e" });
    label(s, tx + 4, map.line, "4390.35", "axis tag");
    return s;
}

s = twister("c-twister1", [524, 137, 1020, 383], 0, "XAUUSDc, M15:  Gold Spot (Cent)",
    ["4408.00", "4399.95", "4391.90", "4383.85", "4375.80", "4367.75"], 162,
    ["28 May 2026", "28 May 06:15", "28 May 07:15", "28 May 08:15", "28 May 09:15", "28 May 10:15"], 1023,
    [[48, 180, 243, 300, 318, 0], [87, 297, 297, 403, 430, 0], [126, 355, 401, 406, 462, 0], [165, 400, 404, 495, 570, 0],
     [204, 488, 493, 643, 723, 0], [243, 605, 643, 672, 755, 0], [282, 573, 648, 672, 745, 1], [321, 640, 648, 758, 785, 0],
     [360, 668, 678, 760, 762, 1], [399, 668, 681, 696, 762, 0], [437, 633, 662, 696, 775, 1], [476, 600, 617, 665, 713, 1],
     [515, 415, 468, 614, 665, 1], [554, 390, 468, 493, 495, 0], [593, 455, 490, 655, 670, 0], [632, 535, 594, 660, 680, 1],
     [671, 520, 594, 597, 643, 1], [710, 535, 552, 598, 612, 1], [749, 430, 477, 555, 555, 1], [788, 375, 425, 480, 515, 1],
     [827, 412, 425, 473, 527, 0], [866, 452, 456, 473, 487, 1]],
    { x: 520, y: 90, kx: 2.119, line: 242, stop: 312.5 });
add(s, "rect", { x: 525, y: 170, width: 6, height: 17, fill: "#e6e6ea" });
line(s, 526, 208, 560, 230, "#b0502c", { "stroke-dasharray": "4 3" });
add(s, "path", { d: "M561.500 229l6 6h-3v4h-6v-4h-3z", fill: "#1262a6", stroke: "#fff" });

s = twister("c-twister2", [614, 378, 1175, 627], 2, "XAUUSDc, M15:  Gold Spot (Cent)",
    ["4416.50", "4406.80", "4397.10", "4387.40", "4377.70", "4368.00"], 406.5,
    ["28 May 2026", "28 May 05:45", "28 May 06:45", "28 May 07:45", "28 May 08:45", "28 May 09:45", "28 May 10:45"], 1178,
    [[41, 70, 70, 157, 157, 0], [75, 123, 150, 240, 312, 0], [116, 170, 195, 240, 270, 1], [157, 148, 195, 245, 262, 0],
     [198, 240, 243, 332, 345, 0], [239, 290, 329, 334, 380, 0], [280, 328, 333, 408, 470, 0], [321, 402, 408, 531, 597, 0],
     [362, 503, 529, 556, 628, 0], [404, 470, 534, 556, 614, 1], [444, 526, 531, 628, 648, 0], [486, 548, 559, 630, 630, 1],
     [527, 546, 559, 577, 632, 0], [568, 525, 546, 573, 642, 1], [610, 490, 509, 550, 592, 1], [650, 340, 384, 508, 550, 1],
     [691, 315, 384, 408, 410, 0], [733, 370, 402, 543, 555, 0], [773, 440, 486, 543, 562, 1], [814, 430, 489, 492, 530, 1],
     [855, 440, 453, 491, 503, 1], [897, 352, 395, 458, 458, 1], [938, 312, 349, 394, 426, 1], [979, 337, 349, 391, 435, 0],
     [1020, 372, 374, 391, 402, 1]],
    { x: 600, y: 380, kx: 2.24, line: 504.5, stop: 563 });
line(s, 633, 467, 688, 492, "#b0502c", { "stroke-dasharray": "4 3" });
add(s, "path", { d: "M633.500 467l6-6h-3v-4h-6v4h-3z", fill: "#e2592b", stroke: "#fff" });
add(s, "path", { d: "M633.500 469l6 6h-3v4h-6v-4h-3zM688.500 494l6 6h-3v4h-6v-4h-3z", fill: "#1262a6", stroke: "#fff" });

// Quantum Queen charts
var top2 = { x: 700, y: 0, kx: 2.119 };
s = document.getElementById("c-queen21");
frame(s, [941, 125, 1492, 360], "#000");
caption(s, 946, 134, "XAUUSDc, H1:  Gold Spot (Cent)", 1490, 138, "Quantum Queen MT5 v2.1");
prices(s, 1498, 129, 36.7, ["4586.30", "4563.90"], "#000");
walk(s, top2, [[928, 490], [948, 465], [965, 495], [990, 505], [1030, 490], [1050, 470], [1080, 485], [1110, 455], [1135, 450], [1145, 500]], 7, 30);
[[1138, 160], [1147, 146], [1147, 153], [1225, 139], [1239, 138], [1239, 147]].forEach(function (p) { arrow(s, p[0], p[1], 1); });
arrow(s, 1147, 164, -1);

s = document.getElementById("c-queen26");
frame(s, [1079, 204, 1573, 560], "#000");
caption(s, 1086, 213, "XAUUSDc, H1:  Gold Spot (Cent)", 1572, 217, "Quantum Queen v2.6_fix");
walk(s, top2, [[826, 950], [838, 770], [850, 860], [860, 820], [885, 840], [900, 890], [920, 905], [940, 900], [955, 930], [975, 910], [1000, 900], [1015, 920], [1030, 960], [1040, 1030]], 11, 45);
walk(s, top2, [[1097, 790], [1100, 715], [1118, 690], [1135, 725], [1150, 740], [1170, 760], [1190, 760], [1205, 710], [1225, 700], [1240, 725], [1260, 700], [1285, 680], [1300, 690], [1312, 670], [1322, 750], [1333, 800]], 5, 45);
[[1218, 236], [1227, 222], [1227, 230], [1305, 218], [1319, 217], [1319, 225], [1324, 256]].forEach(function (p) { arrow(s, p[0], p[1], 1); });
arrow(s, 1227, 242, -1);

var mid7 = { x: 1240, y: 220, kx: 1.96 };
s = document.getElementById("c-advisor");
frame(s, [1200, 299, 1640, 602], "#000");
caption(s, 1204, 308, "XAUUSDc, H1:  Gold Spot (Cent)", 0, 0);
walk(s, mid7, [[-20, 450], [0, 510], [20, 480], [32, 530], [38, 590], [48, 510], [60, 520], [75, 530], [95, 575]], 3, 45);
walk(s, mid7, [[165, 375], [180, 370], [200, 340], [225, 320], [245, 335], [260, 310], [290, 310], [300, 360], [320, 410]], 9, 40);
candle(s, 1291.5, 346, 350, 372, 376, 3, "#fff", "#000");
[[1379, 312], [1392, 310], [1392, 319], [1259, 402]].forEach(function (p) { arrow(s, p[0], p[1], 1); });
arrow(s, 1259, 424, -1);
line(s, 1201, 584, 1640, 584, "#e0743c", { "stroke-dasharray": "12 5 3 5" });
line(s, 1201, 596, 1640, 596, "#2f8f3c", { "stroke-dasharray": "12 5 3 5" });
label(s, 1207, 589, "SELL STOP 0.01 at 4366.52");
times(s, 1199, 612, 73, ["21 May 2026", "22 May 22:00"], "#000");

s = document.getElementById("c-queenm1");
frame(s, [1326, 391, 1780, 674], "#000");
caption(s, 1330, 400, "XAUUSDc, M1:  Gold Spot (Cent)", 0, 0);
prices(s, 1786, 528, 36.7, ["4385.80", "4382.75", "4379.70", "4376.65"], "#000");
walk(s, mid7, [[172, 1140], [180, 1120], [187, 1290], [200, 1240], [213, 1280], [230, 1330], [240, 1300], [250, 1150], [262, 1150], [270, 1060], [280, 1060], [287, 990], [298, 1060], [315, 1020], [330, 1060], [345, 1120], [360, 1130], [375, 1030], [395, 1020], [408, 970], [415, 1030], [435, 1050], [450, 1030], [465, 1030], [475, 1080], [490, 1130], [500, 1135], [512, 1040], [530, 1020], [545, 1030], [550, 1075], [560, 1020], [575, 1030], [600, 1030], [612, 1070], [625, 1000], [632, 890], [645, 905], [660, 930], [672, 880]], 21, 40);
walk(s, mid7, [[990, 880], [1000, 920], [1015, 900]], 2, 10);
line(s, 1487, 590, 1487, 636, "#000");
line(s, 1327, 657.5, 1779, 657.5, "#e0906c", { "stroke-dasharray": "14 6 3 6", "stroke-width": 1.5 });
label(s, 1332, 651, "SL");
for (var t = 1400; t < 1780; t += 73.4) line(s, t, 674, t, 681, "#000");

// Valkyrie
s = document.getElementById("c-valkyrie");
frame(s, [1571, 123, 2053, 362], "#000");
caption(s, 1576, 131, "XAUUSDc, M15:  Gold Spot (Cent)", 2051, 136, "Quantum Valkyrie_4.1");
prices(s, 2059, 141, 36.8, ["4464.70", "4447.80", "4430.90", "4414.00", "4397.10", "4380.20"], "#000");
label(s, 2026, 373, "May 10:00", "axis");
[[358, 465, 480, 522, 524, 1], [374, 475, 482, 500, 512, 0], [396, 480, 486, 500, 510, 1], [447, 490, 495, 512, 520, 1], [467, 490, 497, 515, 525, 0], [486, 480, 486, 515, 530, 1],
 [504, 460, 488, 491, 515, 0], [540, 485, 493, 497, 510, 0], [558, 410, 468, 510, 512, 1], [578, 440, 455, 470, 475, 1], [596, 435, 458, 462, 488, 0], [613, 458, 462, 475, 480, 0], [631, 465, 470, 508, 510, 0],
 [649, 485, 495, 515, 545, 0], [667, 505, 514, 518, 530, 0], [686, 500, 516, 545, 562, 0], [704, 502, 545, 555, 558, 0], [722, 495, 545, 556, 560, 1], [740, 500, 508, 548, 560, 1], [758, 468, 475, 510, 515, 1],
 [777, 470, 475, 598, 600, 0], [795, 582, 595, 632, 634, 0]].forEach(function (c) {
    candle(s, 1400 + c[0] / 1.982, c[1] / 3, c[2] / 3, c[3] / 3, c[4] / 3, 5, c[5] ? "#fff" : "#000", "#000");
});
candle(s, 2032, 300, 300, 305, 306, 3, "#000", "#000");
candle(s, 2040, 301, 303, 306, 308, 4, "#fff", "#000");
line(s, 2031, 336.5, 2050, 336.5, "#e0743c", { "stroke-dasharray": "5 4 10 4" });
line(s, 2031, 355.5, 2050, 355.5, "#2f8f3c", { "stroke-dasharray": "5 4 10 4" });
label(s, 1588, 167, "Quantum Valkyrie", "headline");
line(s, 1572, 178, 1674, 140, "#ff5a0a", { "stroke-width": 2.4 });
line(s, 1682, 137, 1772, 223, "#ff5a0a", { "stroke-width": 2.4 });
add(s, "path", { d: "M1682 136l-9 11-6-11z", fill: "#ff5a0a" });
arrow(s, 1801, 215, 1);
add(s, "rect", { x: 1798, y: 219, width: 5, height: 5, fill: "#000" });

// GBPUSD
s = document.getElementById("c-gbp");
frame(s, [1424, 258, 1964, 491], "#000");
caption(s, 1428, 267, "GBPUSDc, H1:  Great Britain Pound vs US Dollar (Cent)", 1962, 271, "Quantum Emperor MT5_7.5_fix");
prices(s, 1971, 269, 37, ["1.35110", "1.34860", "1.34610", "1.34360", "1.34110", "1.33860"], "#000");
times(s, 1423, 502, 73.3, ["21 May 2026", "22 May 06:00", "22 May 22:00", "25 May 14:00", "26 May 06:00", "26 May 22:00", "27 May 14:00", "28 May 06:00"], "#000");
walk(s, mid7, [[364, 545], [371, 585], [380, 600], [398, 610], [408, 605], [416, 465], [430, 510], [440, 505], [460, 498], [480, 525], [500, 530], [515, 515], [530, 540], [550, 530], [570, 530], [582, 555], [588, 490], [610, 490], [622, 450], [635, 430], [648, 455], [657, 515]], 13, 30);
walk(s, mid7, [[666, 400], [675, 270], [690, 275], [705, 290], [722, 310], [735, 270], [755, 265], [765, 235], [783, 235], [795, 210], [815, 220], [825, 195], [850, 185], [868, 175], [882, 200], [900, 190], [910, 240], [925, 260], [940, 250], [955, 305], [975, 315], [995, 265], [1005, 270], [1010, 340], [1026, 355], [1035, 420], [1044, 485], [1060, 465], [1080, 440], [1100, 440], [1115, 400], [1135, 400], [1145, 420], [1160, 400], [1175, 420], [1190, 440], [1205, 445], [1222, 485], [1232, 460], [1242, 435], [1252, 560], [1262, 510], [1280, 520], [1297, 510], [1310, 535], [1325, 520], [1335, 570], [1350, 640], [1358, 640], [1368, 780], [1378, 745], [1385, 690], [1393, 630], [1404, 628]], 4, 14);
line(s, 1543, 345, 1543, 385, "#000");
line(s, 1433, 400, 1433, 448, "#000");
add(s, "path", { d: "M1425 362L1543 356M1425 373L1543 356M1425 373L1448 387L1437 415", fill: "none", stroke: "#2373a8", "stroke-dasharray": "4 3", "stroke-width": 1.3 });
add(s, "path", { d: "M1763 340L1773 366M1866 385L1878 395", fill: "none", stroke: "#e2592b", "stroke-dasharray": "3 3" });
[[1543, 351], [1451, 383], [1763, 337], [1868, 357], [1859, 373]].forEach(function (p) { arrow(s, p[0], p[1], 1); });
[[1433, 423], [1772, 368], [1878, 393]].forEach(function (p) { arrow(s, p[0], p[1], -1); });

// Window buttons
document.querySelectorAll(".caption").forEach(function (bar) {
    var box = document.createElement("div");
    box.className = "btns";
    box.innerHTML =
        '<button aria-label="Minimize"><svg width="12" height="12"><path d="M1 10.500h10"/></svg></button>' +
        '<button aria-label="Maximize"><svg width="12" height="12"><rect x="1" y="1" width="10" height="10"/></svg></button>' +
        '<button aria-label="Close"><svg width="12" height="12"><path d="M1 1l10 10M11 1L1 11"/></svg></button>';
    bar.appendChild(box);
});

// Deal history; last field marks the level that closed the deal
var deals = [
    ["2026.05.26 16:42:17", "gbpusdc", "17858144417", "0.03", "1.34616", "1.34471", "1.34036", "2026.05.26 18:12:53", "1.34471", "4.35", "QE v7.5", ""],
    ["2026.05.26 16:42:19", "gbpusdc", "17858144446", "0.03", "1.34616", "1.34474", "1.34036", "2026.05.26 18:12:58", "1.34477", "4.17", "QE v7.5", "sl"],
    ["2026.05.26 16:42:29", "gbpusdc", "17858144784", "0.03", "1.34613", "1.34495", "1.34036", "2026.05.26 18:05:44", "1.34494", "3.57", "QE v7.5", "sl"],
    ["2026.05.26 16:42:30", "gbpusdc", "17858144808", "0.03", "1.34613", "1.34472", "1.34036", "2026.05.26 18:12:55", "1.34470", "4.29", "QE v7.5", "sl"],
    ["2026.05.26 16:42:30", "gbpusdc", "17858144820", "0.03", "1.34613", "1.34475", "1.34036", "2026.05.26 18:12:58", "1.34477", "4.08", "QE v7.5", "sl"],
    ["2026.05.26 20:59:04", "xauusdc", "17857885246", "0.01", "4490.42", "4490.17", "4458.87", "2026.05.26 21:00:09", "4490.17", "0.25", "TwisterPro-2", "sl"],
    ["2026.05.27 09:31:22", "xauusdc", "17859165150", "0.01", "4482.31", "4480.97", "4450.83", "2026.05.27 09:31:24", "4480.97", "1.34", "TwisterPro-2", "sl"],
    ["2026.05.27 09:31:22", "xauusdc", "17859449287", "0.01", "4482.31", "4481.48", "4450.83", "2026.05.27 09:31:28", "4481.48", "0.83", "TwisterPro-1", "sl"],
    ["2026.05.27 13:21:53", "gbpusdc", "17860772791", "0.03", "1.34374", "1.36896", "1.34305", "2026.05.27 17:54:31", "1.34305", "2.07", "QE v7.5", "tp"],
    ["2026.05.27 13:21:54", "gbpusdc", "17860772801", "0.03", "1.34372", "1.36896", "1.34305", "2026.05.27 17:54:31", "1.34305", "2.01", "QE v7.5", "tp"],
    ["2026.05.27 13:21:54", "gbpusdc", "17860772813", "0.03", "1.34372", "1.36896", "1.34305", "2026.05.27 17:54:31", "1.34305", "2.01", "QE v7.5", "tp"],
    ["2026.05.27 13:21:55", "gbpusdc", "17860772827", "0.03", "1.34372", "1.36896", "1.34305", "2026.05.27 17:54:31", "1.34305", "2.01", "QE v7.5", "tp"],
    ["2026.05.27 13:21:55", "gbpusdc", "17860772838", "0.03", "1.34372", "1.36896", "1.34305", "2026.05.27 17:54:31", "1.34305", "2.01", "QE v7.5", "tp"],
    ["2026.05.27 13:30:18", "xauusdc", "17860703825", "0.01", "4475.76", "4475.25", "4444.12", "2026.05.27 13:30:56", "4475.25", "0.51", "TwisterPro-2", "sl"],
    ["2026.05.27 15:21:45", "gbpusdc", "17861351007", "0.03", "1.34475", "1.36896", "1.34305", "2026.05.27 17:54:31", "1.34305", "5.10", "QE v7.5 (DTSTfirst)", "tp"],
    ["2026.05.28 04:23:10", "xauusdc", "17862579607", "0.06", "4428.01", "4419.59", "4378.01", "2026.05.28 04:27:02", "4419.59", "50.52", "Quantum Valkyrie", "sl"],
    ["2026.05.28 05:12:53", "xauusdc", "17862110577", "0.06", "4400.45", "4393.44", "4350.45", "2026.05.28 05:56:01", "4393.44", "42.06", "Quantum Valkyrie", "sl"],
    ["2026.05.28 05:12:53", "xauusdc", "17862474295", "0.01", "4400.45", "4400.01", "4369.77", "2026.05.28 05:13:10", "4400.01", "0.44", "TwisterPro-1", "sl"]
];
var icon = '<svg width="12" height="17"><rect x="1" y="1" width="10" height="15" rx="2" fill="#fff" stroke="#b5543f" stroke-width="1.300"/><path d="M4 6h4M4 10h4" stroke="#b5543f" stroke-dasharray="1.500 1"/></svg>';
document.getElementById("deals").innerHTML = deals.map(function (d) {
    var mark = d[11];
    return "<tr><td>" + icon + d[0] + "</td><td>" + d[1] + "</td><td>" + d[2] + "</td><td>sell</td><td>" + d[3] + "</td><td>" + d[4] +
        "</td><td" + (mark === "sl" ? ' class="sl"' : "") + ">" + d[5] + "</td><td" + (mark === "tp" ? ' class="tp"' : "") + ">" + d[6] +
        "</td><td>" + d[7] + "</td><td>" + d[8] + '</td><td class="profit">' + d[9] + "</td><td>" + d[10] + "</td></tr>";
}).join("");
```
